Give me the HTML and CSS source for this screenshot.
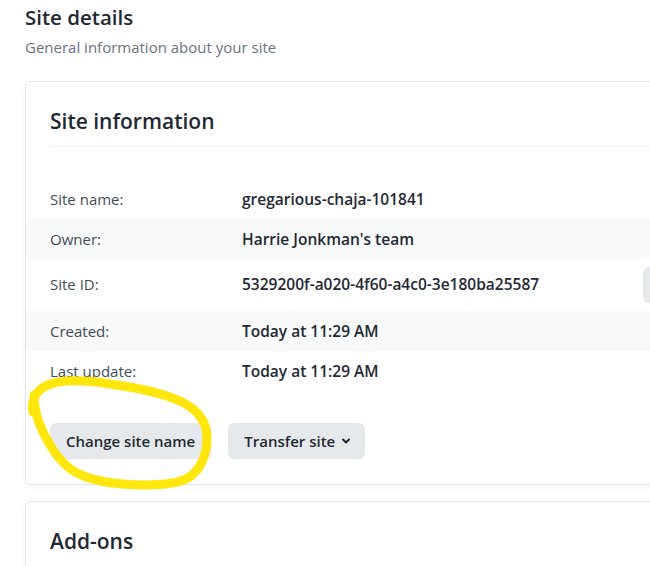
FILE: index.html
```html
<!DOCTYPE html>
<html lang="en">
<head>
<meta charset="utf-8">
<title>Site details</title>
<link rel="stylesheet" href="styles.css">
</head>
<body>
<div class="page">
  <header class="page-head">
    <h1 class="page-title">Site details</h1>
    <p class="page-sub">General information about your site</p>
  </header>

  <section class="card">
    <h2 class="card-title">Site information</h2>
    <dl class="info">
      <div class="row"><dt>Site name:</dt><dd>gregarious-chaja-101841</dd></div>
      <div class="row alt"><dt>Owner:</dt><dd>Harrie Jonkman's team</dd></div>
      <div class="row tall"><dt>Site ID:</dt><dd>5329200f-a020-4f60-a4c0-3e180ba25587</dd>
        <button class="copy" type="button" aria-label="Copy site ID">
          <svg width="16" height="16" viewBox="0 0 16 16"><rect x="5" y="5" width="8" height="9" rx="1.5" fill="none" stroke="#1f2933" stroke-width="1.5"/><path d="M3 11V3.5C3 2.7 3.7 2 4.5 2H10" fill="none" stroke="#1f2933" stroke-width="1.5"/></svg>
        </button>
      </div>
      <div class="row alt"><dt>Created:</dt><dd>Today at 11:29 AM</dd></div>
      <div class="row"><dt>Last update:</dt><dd>Today at 11:29 AM</dd></div>
    </dl>
    <div class="actions">
      <button class="btn" type="button">Change site name</button>
      <button class="btn btn-menu" type="button">Transfer site
        <svg class="chev" width="10" height="10" viewBox="0 0 10 10"><path d="M2 3.5 L5 6.5 L8 3.5" fill="none" stroke="#1f2933" stroke-width="2" stroke-linecap="round" stroke-linejoin="round"/></svg>
      </button>
    </div>
  </section>

  <section class="card">
    <h2 class="card-title">Add-ons</h2>
  </section>

  <svg class="scribble" width="650" height="566" viewBox="0 0 650 566">
    <path d="M33 412 C31 400 36 390 48 385 C62 379 85 380 110 384 C140 388 165 394 182 402 C198 410 207 422 207 438 C207 455 200 471 188 478 C175 485 150 486 122 484 C98 482 80 477 68 467 C55 456 44 437 38 420 C35 410 34 402 34 395" fill="none" stroke="#ffe600" stroke-width="9" stroke-linecap="round" stroke-linejoin="round" opacity="0.95"/>
  </svg>
</div>
</body>
</html>
```

FILE: styles.css
```css
* { box-sizing: border-box; }
html, body { margin: 0; padding: 0; }
body {
  background: #ffffff;
  font-family: "Open Sans", "Noto Sans", sans-serif;
  color: #1f2933;
  overflow: hidden;
  width: 650px;
  height: 566px;
}
.page {
  position: relative;
  width: 760px;
  padding: 0 0 0 25px;
}
.page-head { padding-top: 3px; }
.page-title {
  margin: 0;
  font-size: 20.5px;
  font-weight: 600;
  line-height: 28px;
  color: #1f2933;
}
.page-sub {
  margin: 4px 0 0;
  font-size: 15px;
  line-height: 24px;
  color: #6b7280;
}
.card {
  width: 723px;
  margin-top: 22px;
  background: #fff;
  border: 1px solid #e3e5e8;
  border-radius: 6px;
  box-shadow: 0 2px 6px rgba(0,0,0,0.04);
  padding-bottom: 25px;
}
.card + .card { margin-top: 16px; }
.card-title {
  margin: 0 0 0 24px;
  padding: 23px 0 9px;
  font-size: 21px;
  font-weight: 600;
  line-height: 32px;
  border-bottom: 1px solid #f1f2f3;
  color: #1f2933;
}
.info {
  margin: 32px 0 0;
}
.row {
  display: flex;
  align-items: center;
  height: 40px;
  padding: 0 24px;
  font-size: 15px;
}
.row.alt { background: #f8f9f9; }
.row.tall { height: 52px; }
.row.tall dt, .row.tall dd { padding-bottom: 3px; }
.row dt {
  width: 192px;
  color: #434c56;
}
.row dd {
  margin: 0;
  font-size: 15.5px;
  font-weight: 600;
  color: #1f2933;
}
.copy {
  display: flex;
  align-items: center;
  justify-content: center;
  margin-left: auto;
  width: 80px;
  height: 36px;
  border: 0;
  border-radius: 6px;
  background: #e6e9ec;
}
.actions {
  display: flex;
  gap: 17px;
  padding: 32px 24px 0;
}
.btn {
  display: inline-flex;
  align-items: center;
  gap: 8px;
  height: 36px;
  padding: 0 16px;
  border: 0;
  border-radius: 6px;
  background: #e6e9ec;
  font-family: inherit;
  font-size: 15px;
  font-weight: 600;
  color: #1f2933;
}
.btn-menu { gap: 6px; padding-right: 14px; }
.scribble {
  position: absolute;
  left: 0;
  top: 0;
  pointer-events: none;
}
```
